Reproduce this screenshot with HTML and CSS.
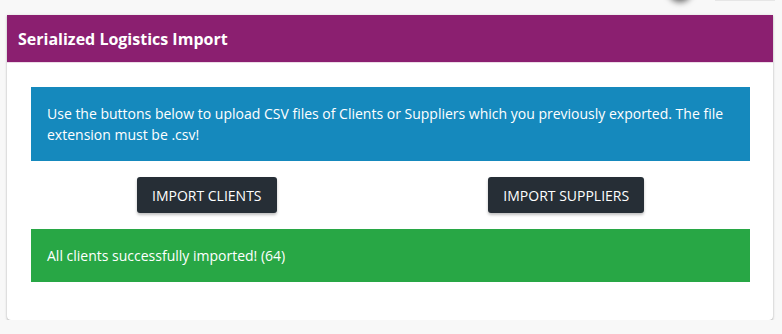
FILE: index.html
```html
<!DOCTYPE html>
<html>
<head>
<meta charset="utf-8">
<link rel="stylesheet" href="styles.css">
</head>
<body>
<div class="topbar">
  <span class="avatar-shadow"></span>
  <span class="menu-edge"></span>
</div>
<div class="card">
  <div class="card-header">Serialized Logistics Import</div>
  <div class="card-body">
    <div class="alert alert-info">Use the buttons below to upload CSV files of Clients or Suppliers which you previously exported. The file extension must be .csv!</div>
    <div class="actions">
      <div class="col"><button class="btn">IMPORT CLIENTS</button></div>
      <div class="col"><button class="btn">IMPORT SUPPLIERS</button></div>
    </div>
    <div class="alert alert-success">All clients successfully imported! (64)</div>
  </div>
</div>
</body>
</html>
```
FILE: styles.css
```css
html, body {
  margin: 0;
  padding: 0;
  background: #f8f8f8;
  font-family: "Open Sans", "Liberation Sans", sans-serif;
}
.topbar {
  position: relative;
  height: 15px;
}
.avatar-shadow {
  position: absolute;
  left: 668px;
  top: -24px;
  width: 24px;
  height: 24px;
  border-radius: 50%;
  box-shadow: 0 2px 6px rgba(0,0,0,0.6);
  background: #f8f8f8;
}
.menu-edge {
  position: absolute;
  left: 715px;
  top: 0;
  width: 60px;
  height: 1px;
  background: #e6e6e6;
}
.card {
  margin-left: 7px;
  width: 766px;
  background: #fff;
  border-radius: 0 0 4px 4px;
  box-shadow: 0 1px 2px rgba(0,0,0,0.3), 0 0 4px rgba(0,0,0,0.06);
}
.card-header {
  height: 48px;
  box-sizing: border-box;
  background: #8b1f70;
  color: #fff;
  font-weight: 700;
  font-size: 16px;
  line-height: 48px;
  padding-left: 11px;
  border-bottom: 1px solid #ecdbe7;
}
.card-body {
  padding: 24px 23px 38px 24px;
}
.alert {
  padding: 16px;
  color: #fff;
  font-size: 14px;
  line-height: 21px;
}
.alert-info {
  background: #1589bd;
}
.alert-success {
  background: #28a745;
}
.actions {
  display: grid;
  grid-template-columns: 1fr 1fr;
  margin: 16px 4px 16px -4px;
}
.col {
  display: flex;
  justify-content: center;
}
.btn {
  height: 36px;
  padding: 0 15px;
  border: none;
  border-radius: 3px;
  background: #262e36;
  color: #fff;
  font-family: "Open Sans", "Liberation Sans", sans-serif;
  font-size: 14px;
  box-shadow: 0 2px 3px rgba(0,0,0,0.25);
}
```
